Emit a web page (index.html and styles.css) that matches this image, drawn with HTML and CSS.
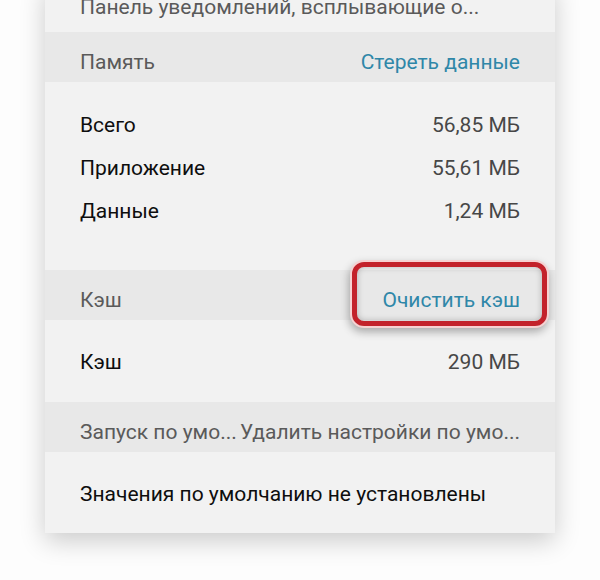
FILE: index.html
```html
<!DOCTYPE html>
<html lang="ru">
<head>
    <meta charset="UTF-8">
    <meta name="viewport" content="width=device-width, initial-scale=1.0">
    <title>О приложении</title>
    <link rel="stylesheet" href="styles.css">
</head>
<body>
    <div class="panel">
        <div class="top-row">Панель уведомлений, всплывающие о...</div>

        <div class="band">
            <span>Память</span>
            <span class="link">Стереть данные</span>
        </div>
        <div class="section">
            <div class="row"><span class="label">Всего</span><span class="value">56,85 МБ</span></div>
            <div class="row"><span class="label">Приложение</span><span class="value">55,61 МБ</span></div>
            <div class="row"><span class="label">Данные</span><span class="value">1,24 МБ</span></div>
        </div>

        <div class="band">
            <span>Кэш</span>
            <span class="link highlight">Очистить кэш</span>
        </div>
        <div class="section section-single">
            <div class="row"><span class="label">Кэш</span><span class="value">290 МБ</span></div>
        </div>

        <div class="band">
            <span>Запуск по умо...</span>
            <span>Удалить настройки по умо...</span>
        </div>
        <div class="section section-last">
            <div class="row"><span class="label">Значения по умолчанию не установлены</span></div>
        </div>
    </div>
</body>
</html>
```

FILE: styles.css
```css
body {
    margin: 0;
    padding: 0 0 60px;
    font-family: Roboto, "Noto Sans", sans-serif;
    font-size: 21px;
    background-color: #fdfdfd;
}
.panel {
    width: 510px;
    margin: -18px 0 0 45px;
    background-color: #f2f2f2;
    box-shadow: 0 8px 24px rgba(0,0,0,0.2);
}
.top-row {
    height: 50px;
    padding: 0 35px;
    display: flex;
    align-items: center;
    color: #5a5a5a;
}
.band {
    height: 50px;
    box-sizing: border-box;
    padding: 9px 35px 0;
    display: flex;
    align-items: center;
    justify-content: space-between;
    background-color: #e8e8e8;
    color: #5a5a5a;
}
.link {
    color: #2f87a8;
}
.highlight {
    position: relative;
}
.highlight::before {
    content: "";
    position: absolute;
    top: -26px;
    bottom: -14px;
    left: -30px;
    right: -27px;
    border: 5px solid #c3222b;
    border-radius: 12px;
    box-shadow: 0 0 0 2px #f6d2d2, -1px 4px 8px 2px rgba(0,0,0,0.3), inset 0 0 6px rgba(0,0,0,0.25);
}
.section {
    padding: 21px 35px 38px;
}
.section-single {
    padding: 20px 35px 19px;
}
.section-last {
    padding: 20px 35px 18px;
}
.row {
    height: 43px;
    display: flex;
    align-items: center;
    justify-content: space-between;
}
.label {
    color: #0e0e0e;
}
.value {
    color: #474747;
}
```
